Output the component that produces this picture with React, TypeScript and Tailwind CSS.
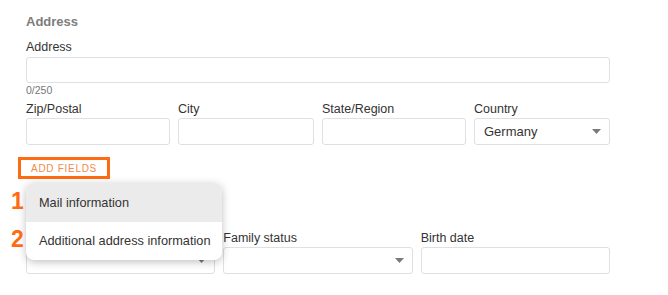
const font = { fontFamily: '"Liberation Sans", Arial, sans-serif' };

function Caret() {
  return (
    <svg width="9" height="5" viewBox="0 0 9 5" className="shrink-0">
      <path d="M0 0h9L4.5 5z" fill="#7a7a7a" />
    </svg>
  );
}

function Field({ label, value, select }: { label?: string; value?: string; select?: boolean }) {
  return (
    <div className="flex flex-col">
      <label className="h-[14px] text-[12.5px] leading-[14px] text-[#333] mb-[2px] whitespace-nowrap">{label}</label>
      <div className="h-[27px] rounded-[3px] border border-[#dde0e4] bg-white flex items-center justify-between pl-[9px] pr-[8px]">
        <span className="text-[13px] text-[#333]">{value}</span>
        {select && <Caret />}
      </div>
    </div>
  );
}

export default function App() {
  return (
    <div className="relative w-[668px] h-[295px] overflow-hidden bg-white" style={font}>
      <div className="pl-[26px] pt-[14px] w-[610px]">
        <h2 className="text-[13px] leading-4 font-bold text-[#7d7d7d]">Address</h2>

        <div className="mt-[10px] flex flex-col">
          <label className="text-[12.5px] leading-[15px] text-[#333] mb-[2px]">Address</label>
          <div className="h-[26px] rounded-[3px] border border-[#dde0e4]" />
          <span className="text-[10.5px] leading-3 text-[#777] mt-[1px]">0/250</span>
        </div>

        <div className="mt-[6px] grid grid-cols-[144px_136px_144px_136px] gap-2">
          <Field label="Zip/Postal" />
          <Field label="City" />
          <Field label="State/Region" />
          <Field label="Country" value="Germany" select />
        </div>

        <button className="mt-[12px] -ml-[8px] h-[22px] w-[92px] border-[3px] border-[#ff6b12] flex items-center justify-center text-[10px] tracking-[0.07em] text-[#f38a4a]">
          ADD FIELDS
        </button>

        {/* first field's label sits under the open menu */}
        <div className="mt-[52px] grid grid-cols-3 gap-2">
          <Field select />
          <Field label="Family status" select />
          <Field label="Birth date" />
        </div>
      </div>

      <div className="absolute left-[26px] top-[183px] w-[196px] rounded-[8px] bg-white shadow-[0_2px_8px_rgba(0,0,0,0.25)] overflow-hidden">
        <div className="h-[39px] bg-[#ebebeb] flex items-center pl-[13px] text-[12.75px] text-[#333] whitespace-nowrap">Mail information</div>
        <div className="h-[38px] flex items-center pl-[13px] text-[12.75px] text-[#333] whitespace-nowrap">Additional address information</div>
      </div>

      <span className="absolute left-[11px] top-[189px] text-[23px] leading-6 font-bold text-[#ff6b12]">1</span>
      <span className="absolute left-[11px] top-[227px] text-[23px] leading-6 font-bold text-[#ff6b12]">2</span>
    </div>
  );
}
